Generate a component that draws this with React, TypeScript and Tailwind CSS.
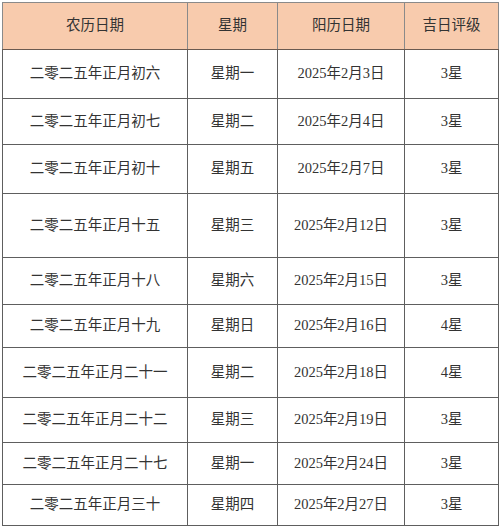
import React from "react";

const rows = [
  { lunar: "二零二五年正月初六", week: "星期一", solar: "2025年2月3日", level: "3星", h: 49 },
  { lunar: "二零二五年正月初七", week: "星期二", solar: "2025年2月4日", level: "3星", h: 46 },
  { lunar: "二零二五年正月初十", week: "星期五", solar: "2025年2月7日", level: "3星", h: 49 },
  { lunar: "二零二五年正月十五", week: "星期三", solar: "2025年2月12日", level: "3星", h: 64 },
  { lunar: "二零二五年正月十八", week: "星期六", solar: "2025年2月15日", level: "3星", h: 47 },
  { lunar: "二零二五年正月十九", week: "星期日", solar: "2025年2月16日", level: "4星", h: 43 },
  { lunar: "二零二五年正月二十一", week: "星期二", solar: "2025年2月18日", level: "4星", h: 50 },
  { lunar: "二零二五年正月二十二", week: "星期三", solar: "2025年2月19日", level: "3星", h: 45 },
  { lunar: "二零二五年正月二十七", week: "星期一", solar: "2025年2月24日", level: "3星", h: 42 },
  { lunar: "二零二五年正月三十", week: "星期四", solar: "2025年2月27日", level: "3星", h: 41 },
];

const font = { fontFamily: '"Liberation Serif", "Noto Sans CJK SC", serif' };

const App = () => {
  return (
    <div className="w-[500px] h-[527px] overflow-hidden bg-white pt-[2px] pl-[2px]" style={font}>
      <table className="border-collapse table-fixed text-[14.5px] text-[#333] text-center">
        <colgroup>
          <col className="w-[185px]" />
          <col className="w-[90px]" />
          <col className="w-[127px]" />
          <col className="w-[94px]" />
        </colgroup>
        <thead>
          <tr className="bg-[#f8cbad] h-[47px]">
            <th className="border border-[#8a8a8a] border-b-[#6b5a50] font-normal">农历日期</th>
            <th className="border border-[#8a8a8a] border-b-[#6b5a50] font-normal">星期</th>
            <th className="border border-[#8a8a8a] border-b-[#6b5a50] font-normal">阳历日期</th>
            <th className="border border-[#8a8a8a] border-b-[#6b5a50] font-normal">吉日评级</th>
          </tr>
        </thead>
        <tbody>
          {rows.map((r, i) => (
            <tr key={i} style={{ height: r.h }}>
              <td className="border border-[#5e5e5e] p-0">{r.lunar}</td>
              <td className="border border-[#5e5e5e] p-0">{r.week}</td>
              <td className="border border-[#5e5e5e] p-0">{r.solar}</td>
              <td className="border border-[#5e5e5e] p-0">{r.level}</td>
            </tr>
          ))}
        </tbody>
      </table>
    </div>
  );
};

export default App;
